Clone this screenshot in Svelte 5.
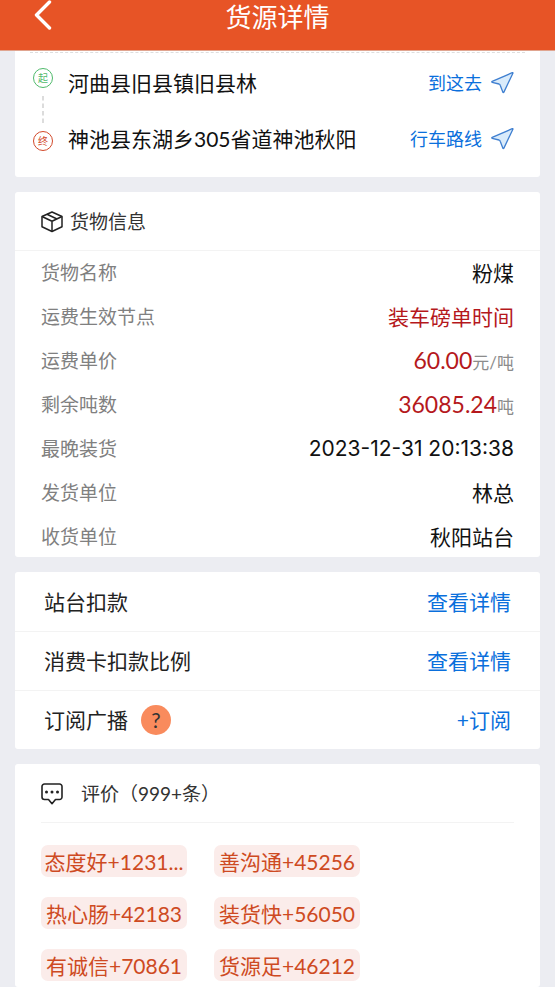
<script>
  const stops = [
    { mark: '起', kind: 'start', place: '河曲县旧县镇旧县林', action: '到这去' },
    { mark: '终', kind: 'end', place: '神池县东湖乡305省道神池秋阳', action: '行车路线' }
  ];

  const cargo = [
    { label: '货物名称', value: '粉煤' },
    { label: '运费生效节点', value: '装车磅单时间', tone: 'red' },
    { label: '运费单价', value: '60.00', tone: 'red big', unit: '元/吨' },
    { label: '剩余吨数', value: '36085.24', tone: 'red big', unit: '吨' },
    { label: '最晚装货', value: '2023-12-31 20:13:38', tone: 'date' },
    { label: '发货单位', value: '林总' },
    { label: '收货单位', value: '秋阳站台' }
  ];

  const services = [
    { label: '站台扣款', action: '查看详情' },
    { label: '消费卡扣款比例', action: '查看详情' },
    { label: '订阅广播', action: '+订阅', help: true }
  ];

  const tags = [
    '态度好+1231...',
    '善沟通+45256',
    '热心肠+42183',
    '装货快+56050',
    '有诚信+70861',
    '货源足+46212'
  ];
</script>

<div class="page">
  <header class="bar">
    <button class="back" type="button" aria-label="返回">
      <svg width="18" height="30" viewBox="0 0 18 30" fill="none" stroke="#fff" stroke-width="3.4" stroke-linecap="round" stroke-linejoin="round">
        <path d="M15.5 2 2.5 15l13 13" />
      </svg>
    </button>
    <h1>货源详情</h1>
  </header>

  <main>
    <section class="card route">
      <div class="divider"></div>
      <div class="route-body">
        <div class="rail">
          <span class="mark start">{stops[0].mark}</span>
          <svg width="2" height="27" viewBox="0 0 2 27" aria-hidden="true">
            <path d="M1 0v27" stroke="#dcdcdc" stroke-width="2" stroke-dasharray="4.5 3" />
          </svg>
          <span class="mark end">{stops[1].mark}</span>
        </div>
        <ul class="stops">
          {#each stops as stop}
            <li>
              <span class="place">{stop.place}</span>
              <a class="nav" href="#{stop.kind}">
                {stop.action}
                <svg width="23" height="22" viewBox="0 0 23 22" fill="#d9ebfb" stroke="#3f7fd0" stroke-width="1.3" stroke-linejoin="round">
                  <path d="M21.300.700 1.200 9.300C.600 9.600.600 10.100 1.200 10.300L8 12c.7.2 1 .6 1.200 1.200l2.600 6.900c.3.600.8.600 1.100 0L21.900 1.200c.2-.4-.1-.7-.6-.5Z" />
                </svg>
              </a>
            </li>
          {/each}
        </ul>
      </div>
    </section>

    <section class="card">
      <h2 class="head cargo-head">
        <svg width="22" height="22" viewBox="0 0 22 22" fill="none" stroke="#222" stroke-width="1.5" stroke-linejoin="round">
          <path d="M11 1 21 5.500v10.300L11 20.500 1 15.800V5.500Z" />
          <path d="M1 5.500 11 10.300 21 5.500M11 10.300V20.500M6 3.300l10 4.700" />
        </svg>
        货物信息
      </h2>
      <dl>
        {#each cargo as row}
          <div>
            <dt>{row.label}</dt>
            <dd class={row.tone}>{row.value}{#if row.unit}<small>{row.unit}</small>{/if}</dd>
          </div>
        {/each}
      </dl>
    </section>

    <section class="card">
      <ul class="services">
        {#each services as item}
          <li>
            <span>{item.label}</span>
            {#if item.help}
              <button class="help" type="button" aria-label="订阅广播说明">?</button>
            {/if}
            <button class="action" type="button">{item.action}</button>
          </li>
        {/each}
      </ul>
    </section>

    <section class="card reviews">
      <h2 class="head review-head">
        <svg width="22" height="22" viewBox="0 0 22 22" fill="none" stroke="#222" stroke-width="1.600" stroke-linejoin="round">
          <path d="M3.500 1h15A2.500 2.500 0 0 1 21 3.500V14a2.500 2.500 0 0 1-2.500 2.500h-4L11 20.700 7.500 16.500h-4A2.500 2.500 0 0 1 1 14V3.500A2.500 2.500 0 0 1 3.500 1Z" />
          <g fill="#222" stroke="none">
            <circle cx="5.500" cy="9" r="1.500" />
            <circle cx="11" cy="9" r="1.500" />
            <circle cx="16.500" cy="9" r="1.500" />
          </g>
        </svg>
        评价（999+条）
      </h2>
      <ul class="tags">
        {#each tags as tag}
          <li>{tag}</li>
        {/each}
      </ul>
    </section>
  </main>
</div>

<style>
  :global(body) {
    margin: 0;
    background: #ecedf2;
  }

  .page {
    display: flex;
    flex-direction: column;
    min-height: 100vh;
    font-family: Lato, 'Noto Sans CJK SC', sans-serif;
    font-size: 21px;
    line-height: 30px;
    color: #111;
    background: #ecedf2;
  }

  h1, h2, ul, dl, dd {
    margin: 0;
    padding: 0;
    font-weight: 400;
    list-style: none;
  }

  button {
    padding: 0;
    border: 0;
    background: none;
    font: inherit;
    color: inherit;
    cursor: pointer;
  }

  svg {
    display: block;
    flex: none;
  }

  .bar {
    display: grid;
    grid-template-columns: 60px 1fr 60px;
    box-sizing: border-box;
    height: 51px;
    border-bottom: 1px solid #e0a590;
    background: #e75426;
    color: #fff;
  }

  .back {
    display: flex;
    align-items: flex-start;
    padding-left: 34px;
  }

  h1 {
    font-size: 26px;
    line-height: 34px;
    text-align: center;
  }

  main {
    display: flex;
    flex: 1;
    flex-direction: column;
    gap: 15px;
    padding: 0 15px;
  }

  .card {
    border-radius: 3px;
    background: #fff;
  }

  .route {
    border-radius: 0 0 3px 3px;
    padding: 1px 0 10px;
  }

  .divider {
    margin: 0 15px;
    border-top: 1px dashed #dedede;
  }

  .route-body {
    display: flex;
    gap: 15px;
    padding: 2px 26px 0 18px;
  }

  .rail {
    display: flex;
    flex-direction: column;
    align-items: center;
    gap: 8px;
    padding-top: 13px;
  }

  .mark {
    box-sizing: border-box;
    width: 20px;
    height: 20px;
    border: 1px solid;
    border-radius: 50%;
    font-size: 10px;
    line-height: 18px;
    text-align: center;
  }

  .mark.start {
    color: #4fba6b;
  }

  .mark.end {
    color: #d2492a;
  }

  .stops {
    flex: 1;
  }

  .stops li {
    display: flex;
    align-items: center;
    justify-content: space-between;
    height: 56px;
  }

  .nav {
    display: flex;
    align-items: center;
    gap: 9px;
    font-size: 18px;
    color: #0a6fdc;
    text-decoration: none;
  }

  .head {
    display: flex;
    align-items: center;
    box-sizing: border-box;
    height: 59px;
    padding-top: 2px;
    border-bottom: 1px solid #f3f3f3;
    font-size: 19px;
    color: #333;
  }

  .cargo-head {
    gap: 7px;
    padding-left: 26px;
  }

  dl {
    display: flex;
    flex-direction: column;
    gap: 4px;
    padding: 2px 26px 0;
  }

  dl div {
    display: flex;
    align-items: center;
    justify-content: space-between;
    height: 40px;
  }

  dt {
    font-size: 19px;
    color: #808080;
  }

  .red {
    color: #b5181c;
  }

  .big {
    font-size: 23px;
  }

  .date {
    font-family: Inter, sans-serif;
  }

  small {
    font-size: 17px;
    color: #8c8c8c;
  }

  .services li {
    display: flex;
    align-items: center;
    box-sizing: border-box;
    height: 59px;
    padding: 0 29px;
    color: #222;
  }

  .services li + li {
    border-top: 1px solid #f3f3f3;
  }

  .help {
    width: 30px;
    height: 30px;
    margin-left: 13px;
    border-radius: 50%;
    background: #f98b5d;
    color: #333;
  }

  .action {
    margin-left: auto;
    color: #0a6fdc;
  }

  .reviews {
    flex: 1;
    padding: 0 26px 6px;
  }

  .review-head {
    gap: 18px;
  }

  .tags {
    display: grid;
    grid-template-columns: repeat(auto-fill, 146px);
    gap: 20px 27px;
    padding-top: 22px;
    max-width: 420px;
  }

  .tags li {
    height: 32px;
    border-radius: 7px;
    background: #fbecea;
    line-height: 33px;
    text-align: center;
    white-space: nowrap;
    color: #ce4a22;
  }
</style>
